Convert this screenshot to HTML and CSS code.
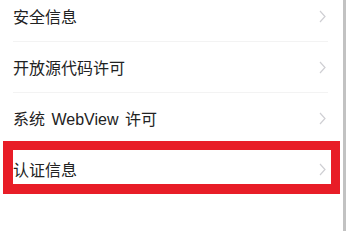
FILE: index.html
```html
<!DOCTYPE html>
<html lang="zh-CN">
<head>
    <meta charset="UTF-8">
    <meta name="viewport" content="width=device-width, initial-scale=1.0">
    <title>关于</title>
    <link rel="stylesheet" href="styles.css">
</head>
<body>
    <div class="screen">
        <div class="list">
            <div class="row">
                <span class="label">安全信息</span>
                <svg class="chevron" width="7" height="13" viewBox="0 0 7 13"><polyline points="1,1 6,6.5 1,12" fill="none" stroke="#cfcfd3" stroke-width="1.2"/></svg>
            </div>
            <div class="row">
                <span class="label">开放源代码许可</span>
                <svg class="chevron" width="7" height="13" viewBox="0 0 7 13"><polyline points="1,1 6,6.5 1,12" fill="none" stroke="#cfcfd3" stroke-width="1.2"/></svg>
            </div>
            <div class="row">
                <span class="label">系统 WebView 许可</span>
                <svg class="chevron" width="7" height="13" viewBox="0 0 7 13"><polyline points="1,1 6,6.5 1,12" fill="none" stroke="#cfcfd3" stroke-width="1.2"/></svg>
            </div>
            <div class="row highlighted">
                <span class="label">认证信息</span>
                <svg class="chevron" width="7" height="13" viewBox="0 0 7 13"><polyline points="1,1 6,6.5 1,12" fill="none" stroke="#cfcfd3" stroke-width="1.2"/></svg>
                <div class="mark"></div>
            </div>
        </div>
        <div class="scrollbar"></div>
    </div>
</body>
</html>
```

FILE: styles.css
```css
body {
    margin: 0;
    background-color: #ffffff;
    font-family: "Liberation Sans", "Noto Sans CJK SC", sans-serif;
    overflow: hidden;
}
.screen {
    display: flex;
    height: 231px;
}
.list {
    flex: 1;
    margin-top: -9px;
}
.row {
    position: relative;
    display: flex;
    align-items: center;
    justify-content: space-between;
    height: 50px;
    padding: 0 17px 0 13px;
}
.row::after {
    content: "";
    position: absolute;
    left: 13px;
    right: 15px;
    bottom: -1px;
    height: 1px;
    background-color: #f3f3f3;
}
.row + .row {
    margin-top: 1px;
}
.highlighted::after {
    display: none;
}
.label {
    font-size: 16px;
    color: #222222;
    word-spacing: 2px;
}
.chevron {
    display: block;
}
.mark {
    position: absolute;
    top: -3px;
    left: 3px;
    right: 3px;
    bottom: 0;
    border-style: solid;
    border-color: #e81d27;
    border-width: 9px 9px 10px 10px;
}
.scrollbar {
    width: 3px;
    background-color: #c2c2c2;
}
```
